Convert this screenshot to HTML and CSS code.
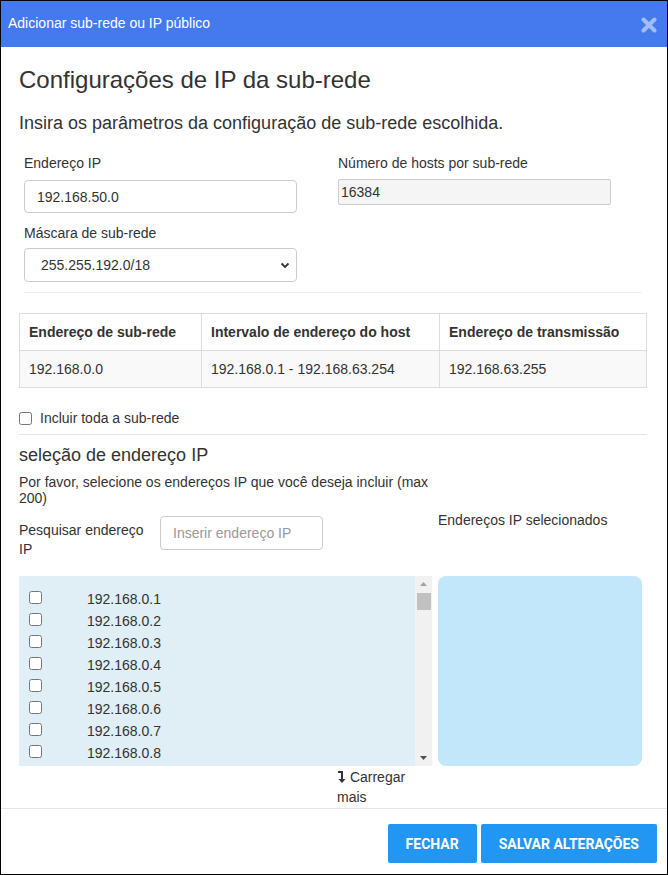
FILE: index.html
```html
<!DOCTYPE html>
<html lang="pt">
<head>
<meta charset="utf-8">
<title>Adicionar sub-rede ou IP público</title>
<link rel="stylesheet" href="styles.css">
</head>
<body>
<div class="dialog">
  <div class="dlg-header">
    <span class="dlg-title">Adicionar sub-rede ou IP público</span>
    <svg class="close" width="16" height="16" viewBox="0 0 16 16" aria-label="Fechar"><path d="M2.5 2.5 L13.5 13.5 M13.5 2.5 L2.5 13.5" stroke="#fff" stroke-width="4" stroke-linecap="round" fill="none"/></svg>
  </div>
  <div class="dlg-body">
    <h2 class="title">Configurações de IP da sub-rede</h2>
    <h4 class="subtitle">Insira os parâmetros da configuração de sub-rede escolhida.</h4>

    <div class="form-grid">
      <div class="field">
        <label class="lbl">Endereço IP</label>
        <input class="txt" type="text" value="192.168.50.0">
        <label class="lbl lbl-mask">Máscara de sub-rede</label>
        <div class="select-wrap">
          <select class="sel"><option>255.255.192.0/18</option></select>
          <svg class="chev" width="10" height="7" viewBox="0 0 10 7"><path d="M1.5 1.5 L5 5 L8.5 1.5" stroke="#333" stroke-width="1.8" fill="none"/></svg>
        </div>
      </div>
      <div class="field">
        <label class="lbl">Número de hosts por sub-rede</label>
        <input class="txt disabled" type="text" value="16384" disabled>
      </div>
    </div>
    <hr class="sep-inner">

    <table class="info">
      <thead>
        <tr><th class="c1">Endereço de sub-rede</th><th class="c2">Intervalo de endereço do host</th><th class="c3">Endereço de transmissão</th></tr>
      </thead>
      <tbody>
        <tr><td>192.168.0.0</td><td>192.168.0.1 - 192.168.63.254</td><td>192.168.63.255</td></tr>
      </tbody>
    </table>

    <label class="check-row"><input type="checkbox" class="cb"> Incluir toda a sub-rede</label>
    <hr class="sep">

    <h4 class="sec-title">seleção de endereço IP</h4>
    <p class="hint">Por favor, selecione os endereços IP que você deseja incluir (max 200)</p>

    <div class="pick-grid">
      <div class="search-row">
        <label class="search-lbl">Pesquisar endereço IP</label>
        <input class="txt search" type="text" placeholder="Inserir endereço IP">
      </div>
      <div class="sel-lbl">Endereços IP selecionados</div>

      <div class="list">
        <div class="list-items">
          <label class="item"><input type="checkbox" class="cb"><span>192.168.0.1</span></label>
          <label class="item"><input type="checkbox" class="cb"><span>192.168.0.2</span></label>
          <label class="item"><input type="checkbox" class="cb"><span>192.168.0.3</span></label>
          <label class="item"><input type="checkbox" class="cb"><span>192.168.0.4</span></label>
          <label class="item"><input type="checkbox" class="cb"><span>192.168.0.5</span></label>
          <label class="item"><input type="checkbox" class="cb"><span>192.168.0.6</span></label>
          <label class="item"><input type="checkbox" class="cb"><span>192.168.0.7</span></label>
          <label class="item"><input type="checkbox" class="cb"><span>192.168.0.8</span></label>
        </div>
        <div class="scrollbar">
          <svg class="arrow" width="17" height="17" viewBox="0 0 17 17"><path d="M5 10 L8.5 6 L12 10 Z" fill="#a3a3a3"/></svg>
          <div class="thumb"></div>
          <div class="track-fill"></div>
          <svg class="arrow" width="17" height="17" viewBox="0 0 17 17"><path d="M5 7 L12 7 L8.5 11 Z" fill="#505050"/></svg>
        </div>
      </div>
      <div class="selected-box"></div>

      <div class="load-more"><svg class="lm-icon" width="9" height="12" viewBox="0 0 9 12"><path d="M1 0 H6 V8 H8.5 L5 12 L1.5 8 H4 V2 H1 Z" fill="#333"/></svg> Carregar mais</div>
    </div>
  </div>
  <div class="dlg-footer">
    <button class="btn">FECHAR</button>
    <button class="btn">SALVAR ALTERAÇÕES</button>
  </div>
</div>
</body>
</html>
```
FILE: styles.css
```css
* { box-sizing: border-box; }
html, body { margin: 0; padding: 0; background: #fff; }
body { font-family: "Liberation Sans", Arial, sans-serif; font-size: 14px; color: #333; }

.dialog {
  width: 668px;
  height: 875px;
  border: 1px solid #000;
  display: flex;
  flex-direction: column;
  background: #fff;
}

.dlg-header {
  height: 46px;
  flex: none;
  background: #447aee;
  display: flex;
  align-items: center;
  justify-content: space-between;
  padding: 0 10px 0 7px;
}
.dlg-title { color: #fff; font-size: 14px; line-height: 20px; margin-top: -3px; }
.close { opacity: .5; display: block; margin-top: 2px; }

.dlg-body { padding: 20px 20px 0 18px; flex: none; }

.title { margin: 0; font-size: 24px; font-weight: normal; line-height: 26px; }
.subtitle { margin: 20px 0 0; font-size: 18px; font-weight: normal; line-height: 20px; }

.form-grid {
  margin-top: 20px;
  padding: 0 5px;
  display: grid;
  grid-template-columns: 314px 1fr;
}
.field { display: flex; flex-direction: column; align-items: flex-start; }
.lbl { font-size: 14px; line-height: 20px; margin-bottom: 7px; }
.lbl-mask { margin-top: 10px; margin-bottom: 5px; }
.field:nth-child(2) .lbl { margin-bottom: 6px; }

.txt {
  width: 273px;
  height: 33px;
  border: 1px solid #ccc;
  border-radius: 4px;
  padding: 0 12px;
  font-family: inherit;
  font-size: 14px;
  color: #333;
  background: #fff;
  outline: none;
}
.txt.disabled {
  height: 26px;
  padding: 0 2px;
  border-radius: 2px;
  background: #f5f5f5;
  color: #333;
  border-color: #ccc;
  -webkit-text-fill-color: #333;
  opacity: 1;
}
.txt::placeholder { color: #999; }

.select-wrap { position: relative; width: 273px; }
.sel {
  -webkit-appearance: none;
  appearance: none;
  width: 273px;
  height: 34px;
  border: 1px solid #ccc;
  border-radius: 4px;
  padding: 0 16px;
  font-family: inherit;
  font-size: 14px;
  color: #333;
  background: #fff;
}
.chev { position: absolute; right: 7px; top: 14px; }

.sep-inner { margin: 10px 5px 20px; border: 0; border-top: 1px solid #eee; height: 0; }
.sep { margin: 6px 0 10px; border: 0; border-top: 1px solid #e5e5e5; height: 0; }

.info { width: 628px; border-collapse: collapse; border: 1px solid #ddd; }
.info th, .info td {
  border: 1px solid #ddd;
  padding: 8px 8px 8px 9px;
  line-height: 20px;
  text-align: left;
  font-size: 14px;
}
.info th { font-weight: bold; background: #fff; }
.info td { background: #f9f9f9; }
.c1 { width: 182px; }
.c2 { width: 238px; }

.check-row { display: flex; align-items: center; gap: 8px; margin-top: 20px; line-height: 20px; }
.cb { margin: 0; width: 13px; height: 13px; flex: none; }

.sec-title { margin: 0; font-size: 18px; font-weight: normal; line-height: 20px; }
.hint { margin: 9px 0 0; width: 413px; line-height: 16px; }

.pick-grid {
  margin-top: 5px;
  display: grid;
  grid-template-columns: 413px 204px;
  column-gap: 6px;
  row-gap: 17px;
  align-items: start;
}
.search-row { display: flex; align-items: flex-start; }
.search-lbl { width: 130px; padding-top: 10px; line-height: 19px; margin-right: 11px; }
.txt.search { width: 163px; height: 34px; margin-top: 5px; padding: 0 12px; }
.sel-lbl { line-height: 19px; }

.list { height: 190px; background: #e0eef6; display: flex; overflow: hidden; }
.list-items { flex: 1; padding: 12px 0 0 10px; }
.item { display: flex; align-items: center; height: 22px; gap: 45px; }
.item .cb { margin-top: -3px; }
.item span { line-height: 22px; }

.scrollbar { width: 17px; flex: none; background: #f1f1f1; display: flex; flex-direction: column; }
.arrow { display: block; flex: none; }
.thumb { height: 17px; margin: 0 1px 0 2px; background: #c1c1c1; flex: none; }
.track-fill { flex: 1; }

.selected-box { height: 190px; background: #c2e7fa; border-radius: 8px; }

.load-more {
  grid-column: 1;
  margin: -16px 0 0 318px;
  width: 95px;
  line-height: 20px;
}
.lm-icon { vertical-align: -1px; }

.dlg-footer {
  margin-top: auto;
  border-top: 1px solid #e5e5e5;
  padding: 15px 10px 11px;
  display: flex;
  justify-content: flex-end;
  gap: 4px;
}
.btn {
  height: 39px;
  padding: 0 18px;
  background: #2196f3;
  color: #fff;
  border: 0;
  border-radius: 2px;
  font-family: Roboto, "Liberation Sans", Arial, sans-serif;
  font-weight: bold;
  font-size: 14px;
}
```
